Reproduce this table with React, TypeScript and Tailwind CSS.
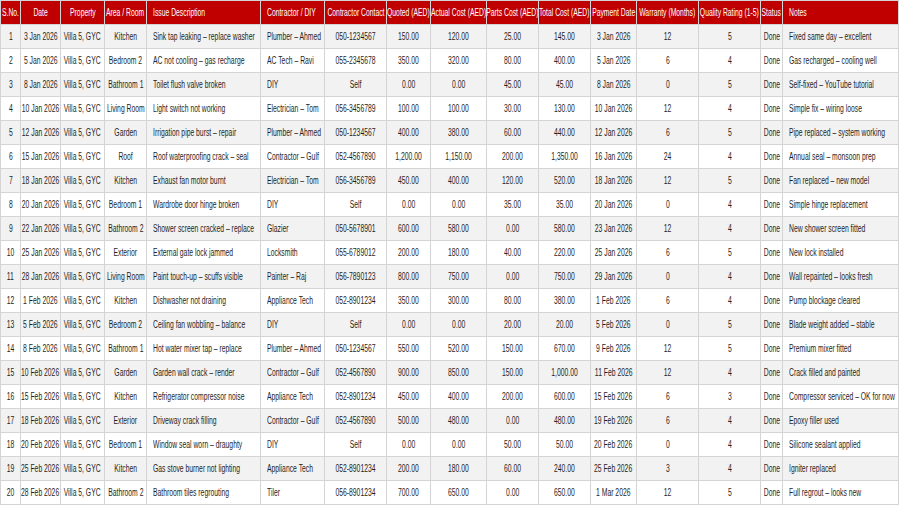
const headers = [
  "S.No.",
  "Date",
  "Property",
  "Area / Room",
  "Issue Description",
  "Contractor / DIY",
  "Contractor Contact",
  "Quoted (AED)",
  "Actual Cost (AED)",
  "Parts Cost (AED)",
  "Total Cost (AED)",
  "Payment Date",
  "Warranty (Months)",
  "Quality Rating (1-5)",
  "Status",
  "Notes",
];

const widths = [20, 40, 44, 42, 114, 64, 62, 44, 56, 52, 52, 46, 62, 62, 22, 116];

// columns with left aligned text
const leftCols = [4, 5, 15];

const rows: string[][] = [
  ["3 Jan 2026", "Kitchen", "Sink tap leaking – replace washer", "Plumber – Ahmed", "050-1234567", "150.00", "120.00", "25.00", "145.00", "3 Jan 2026", "12", "5", "Fixed same day – excellent"],
  ["5 Jan 2026", "Bedroom 2", "AC not cooling – gas recharge", "AC Tech – Ravi", "055-2345678", "350.00", "320.00", "80.00", "400.00", "5 Jan 2026", "6", "4", "Gas recharged – cooling well"],
  ["8 Jan 2026", "Bathroom 1", "Toilet flush valve broken", "DIY", "Self", "0.00", "0.00", "45.00", "45.00", "8 Jan 2026", "0", "5", "Self-fixed – YouTube tutorial"],
  ["10 Jan 2026", "Living Room", "Light switch not working", "Electrician – Tom", "056-3456789", "100.00", "100.00", "30.00", "130.00", "10 Jan 2026", "12", "4", "Simple fix – wiring loose"],
  ["12 Jan 2026", "Garden", "Irrigation pipe burst – repair", "Plumber – Ahmed", "050-1234567", "400.00", "380.00", "60.00", "440.00", "12 Jan 2026", "6", "5", "Pipe replaced – system working"],
  ["15 Jan 2026", "Roof", "Roof waterproofing crack – seal", "Contractor – Gulf", "052-4567890", "1,200.00", "1,150.00", "200.00", "1,350.00", "16 Jan 2026", "24", "4", "Annual seal – monsoon prep"],
  ["18 Jan 2026", "Kitchen", "Exhaust fan motor burnt", "Electrician – Tom", "056-3456789", "450.00", "400.00", "120.00", "520.00", "18 Jan 2026", "12", "5", "Fan replaced – new model"],
  ["20 Jan 2026", "Bedroom 1", "Wardrobe door hinge broken", "DIY", "Self", "0.00", "0.00", "35.00", "35.00", "20 Jan 2026", "0", "4", "Simple hinge replacement"],
  ["22 Jan 2026", "Bathroom 2", "Shower screen cracked – replace", "Glazier", "050-5678901", "600.00", "580.00", "0.00", "580.00", "23 Jan 2026", "12", "4", "New shower screen fitted"],
  ["25 Jan 2026", "Exterior", "External gate lock jammed", "Locksmith", "055-6789012", "200.00", "180.00", "40.00", "220.00", "25 Jan 2026", "6", "5", "New lock installed"],
  ["28 Jan 2026", "Living Room", "Paint touch-up – scuffs visible", "Painter – Raj", "056-7890123", "800.00", "750.00", "0.00", "750.00", "29 Jan 2026", "0", "4", "Wall repainted – looks fresh"],
  ["1 Feb 2026", "Kitchen", "Dishwasher not draining", "Appliance Tech", "052-8901234", "350.00", "300.00", "80.00", "380.00", "1 Feb 2026", "6", "4", "Pump blockage cleared"],
  ["5 Feb 2026", "Bedroom 2", "Ceiling fan wobbling – balance", "DIY", "Self", "0.00", "0.00", "20.00", "20.00", "5 Feb 2026", "0", "5", "Blade weight added – stable"],
  ["8 Feb 2026", "Bathroom 1", "Hot water mixer tap – replace", "Plumber – Ahmed", "050-1234567", "550.00", "520.00", "150.00", "670.00", "9 Feb 2026", "12", "5", "Premium mixer fitted"],
  ["10 Feb 2026", "Garden", "Garden wall crack – render", "Contractor – Gulf", "052-4567890", "900.00", "850.00", "150.00", "1,000.00", "11 Feb 2026", "12", "4", "Crack filled and painted"],
  ["15 Feb 2026", "Kitchen", "Refrigerator compressor noise", "Appliance Tech", "052-8901234", "450.00", "400.00", "200.00", "600.00", "15 Feb 2026", "6", "3", "Compressor serviced – OK for now"],
  ["18 Feb 2026", "Exterior", "Driveway crack filling", "Contractor – Gulf", "052-4567890", "500.00", "480.00", "0.00", "480.00", "19 Feb 2026", "6", "4", "Epoxy filler used"],
  ["20 Feb 2026", "Bedroom 1", "Window seal worn – draughty", "DIY", "Self", "0.00", "0.00", "50.00", "50.00", "20 Feb 2026", "0", "4", "Silicone sealant applied"],
  ["25 Feb 2026", "Kitchen", "Gas stove burner not lighting", "Appliance Tech", "052-8901234", "200.00", "180.00", "60.00", "240.00", "25 Feb 2026", "3", "4", "Igniter replaced"],
  ["28 Feb 2026", "Bathroom 2", "Bathroom tiles regrouting", "Tiler", "056-8901234", "700.00", "650.00", "0.00", "650.00", "1 Mar 2026", "12", "5", "Full regrout – looks new"],
];

// the sheet uses a condensed face; squeeze Liberation Sans to match
function CellText({ text, left }: { text: string; left: boolean }) {
  return (
    <div className={`flex ${left ? "justify-start pl-[6px]" : "justify-center"}`}>
      <span
        className={`inline-block shrink-0 whitespace-nowrap scale-x-[0.68] ${
          left ? "origin-left" : "origin-center"
        }`}
      >
        {text}
      </span>
    </div>
  );
}

export default function App() {
  return (
    <div className="w-[900px] h-[529px] bg-white overflow-hidden">
      <table
        className="table-fixed border-collapse w-[899px] text-[10px] leading-none text-[#1f1f1f]"
        style={{ fontFamily: '"Liberation Sans", Arial, sans-serif' }}
      >
        <colgroup>
          {widths.map((w, i) => (
            <col key={i} style={{ width: w }} />
          ))}
        </colgroup>
        <thead>
          <tr className="h-6 bg-[#c00000] text-white">
            {headers.map((h, i) => (
              <th key={i} className="border border-[#d4d4d4] font-normal p-0 overflow-hidden">
                <CellText text={h} left={leftCols.includes(i)} />
              </th>
            ))}
          </tr>
        </thead>
        <tbody>
          {rows.map((r, idx) => {
            const cells = [String(idx + 1), r[0], "Villa 5, GYC", r[1], r[2], r[3], r[4], r[5], r[6], r[7], r[8], r[9], r[10], r[11], "Done", r[12]];
            return (
              <tr key={idx} className={`h-6 ${idx % 2 === 0 ? "bg-[#f2f2f2]" : "bg-white"}`}>
                {cells.map((c, i) => (
                  <td key={i} className="border border-[#d4d4d4] p-0 overflow-hidden">
                    <CellText text={c} left={leftCols.includes(i)} />
                  </td>
                ))}
              </tr>
            );
          })}
        </tbody>
      </table>
    </div>
  );
}
